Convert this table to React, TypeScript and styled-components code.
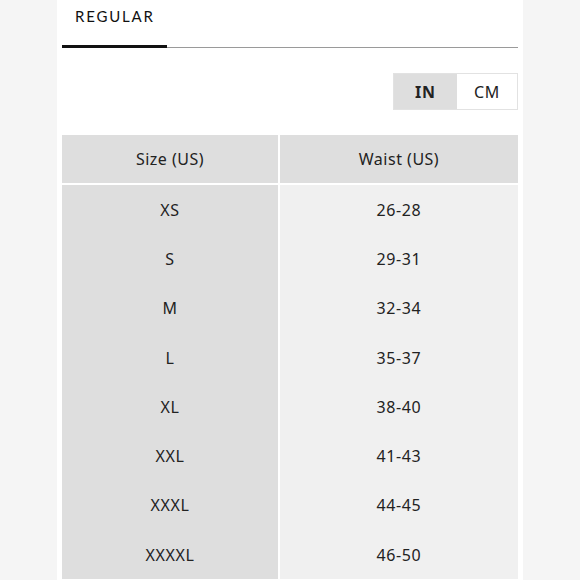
import styled, { createGlobalStyle } from "styled-components";
import { Fragment, useState } from "react";

const GlobalStyle = createGlobalStyle`
  body {
    margin: 0;
    background: #f5f5f5;
    font-family: "Noto Sans", "Open Sans", sans-serif;
    color: #222222;
  }
`;

const Panel = styled.div`
  width: 456px;
  min-height: 580px;
  margin-left: 57px;
  padding: 0 5px;
  background: #ffffff;
  overflow: hidden;
`;

const TabBar = styled.div`
  display: flex;
  border-bottom: 1px solid #9a9a9a;
`;

const Tab = styled.div<{ $active?: boolean }>`
  box-sizing: border-box;
  width: 105px;
  height: 48px;
  margin-bottom: -1px;
  padding: 6px 0 0 13px;
  font-family: "Lato", "Noto Sans", sans-serif;
  font-size: 15px;
  line-height: 20px;
  letter-spacing: 1.8px;
  color: #111111;
  border-bottom: 3px solid ${(p) => (p.$active ? "#111111" : "transparent")};
`;

const ToggleRow = styled.div`
  display: flex;
  justify-content: flex-end;
  margin-top: 25px;
`;

const Toggle = styled.div`
  display: flex;
  border: 1px solid #e2e2e2;
`;

const UnitButton = styled.button<{ $active?: boolean; $w: number }>`
  width: ${(p) => p.$w}px;
  height: 35px;
  border: none;
  padding: 0;
  font-family: "Noto Sans", sans-serif;
  font-size: 16px;
  font-weight: ${(p) => (p.$active ? 700 : 400)};
  letter-spacing: 0.8px;
  color: #222222;
  background: ${(p) => (p.$active ? "#dedede" : "#ffffff")};
  cursor: pointer;
`;

const Table = styled.div`
  display: grid;
  grid-template-columns: 216px 238px;
  column-gap: 2px;
  margin-top: 25px;
`;

const HeadCell = styled.div`
  height: 48px;
  margin-bottom: 2px;
  display: flex;
  align-items: center;
  justify-content: center;
  background: #dedede;
  font-size: 16px;
  letter-spacing: 0.5px;
`;

const Cell = styled.div<{ $col: number }>`
  height: 49.3px;
  display: flex;
  align-items: center;
  justify-content: center;
  background: ${(p) => (p.$col === 0 ? "#dedede" : "#f0f0f0")};
  font-size: 16px;
  letter-spacing: 0.6px;
`;

const rows: [string, string, string][] = [
  ["XS", "26-28", "66-71"],
  ["S", "29-31", "74-79"],
  ["M", "32-34", "81-86"],
  ["L", "35-37", "89-94"],
  ["XL", "38-40", "97-102"],
  ["XXL", "41-43", "104-109"],
  ["XXXL", "44-45", "112-114"],
  ["XXXXL", "46-50", "117-127"],
];

export default function App() {
  const [unit, setUnit] = useState<"in" | "cm">("in");

  return (
    <>
      <GlobalStyle />
      <Panel>
        <TabBar>
          <Tab $active>REGULAR</Tab>
        </TabBar>
        <ToggleRow>
          <Toggle>
            <UnitButton $w={63} $active={unit === "in"} onClick={() => setUnit("in")}>
              IN
            </UnitButton>
            <UnitButton $w={60} $active={unit === "cm"} onClick={() => setUnit("cm")}>
              CM
            </UnitButton>
          </Toggle>
        </ToggleRow>
        <Table>
          <HeadCell>Size (US)</HeadCell>
          <HeadCell>Waist (US)</HeadCell>
          {rows.map((r) => (
            <Fragment key={r[0]}>
              <Cell $col={0}>{r[0]}</Cell>
              <Cell $col={1}>{unit === "in" ? r[1] : r[2]}</Cell>
            </Fragment>
          ))}
        </Table>
      </Panel>
    </>
  );
}
